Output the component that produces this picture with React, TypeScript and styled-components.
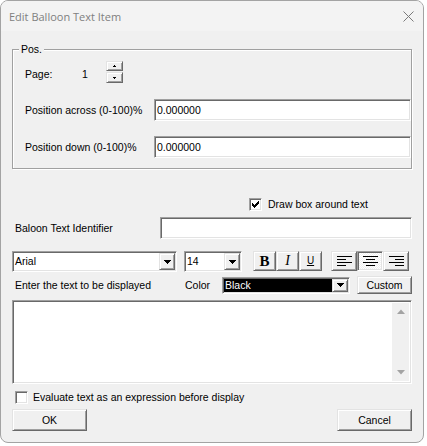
import React from 'react';
import styled, { createGlobalStyle, css } from 'styled-components';

const Global = createGlobalStyle`
  html, body { margin: 0; padding: 0; background: #ffffff; }
  * { box-sizing: border-box; }
`;

const sunken = css`
  border-style: solid;
  border-width: 1px;
  border-color: #a0a0a0 #ffffff #ffffff #a0a0a0;
  box-shadow: inset 1px 1px 0 #696969, inset -1px -1px 0 #e3e3e3;
`;

const raised = css`
  border-style: solid;
  border-width: 1px;
  border-color: #e3e3e3 #696969 #696969 #e3e3e3;
  box-shadow: inset 1px 1px 0 #ffffff, inset -1px -1px 0 #a0a0a0;
  background: #f0f0f0;
`;

const Window = styled.div`
  width: 424px;
  height: 443px;
  border: 1px solid #a3a3a3;
  border-radius: 8px;
  background: #f0f0f0;
  overflow: hidden;
  display: flex;
  flex-direction: column;
  font-family: "Liberation Sans", Arial, sans-serif;
  font-size: 10.5px;
  color: #000;
`;

const TitleBar = styled.div`
  height: 30px;
  flex: none;
  background: #f3f3f3;
  display: flex;
  align-items: center;
  justify-content: space-between;
  padding: 1px 9px 0 8px;
`;

const TitleText = styled.span`
  font-family: "Open Sans", "Noto Sans", sans-serif;
  font-size: 11px;
  color: #808080;
`;

const Body = styled.div`
  flex: 1;
  display: flex;
  flex-direction: column;
  padding: 0 11px;
`;

const Group = styled.div`
  position: relative;
  margin-top: 18px;
  height: 120px;
  flex: none;
  border: 1px solid #a0a0a0;
  box-shadow: inset 1px 1px 0 #fff, 1px 1px 0 #fff;
  padding: 11px 0 0 12px;
  display: flex;
  flex-direction: column;
`;

const Legend = styled.span`
  position: absolute;
  top: -7px;
  left: 6px;
  padding: 0 2px 0 2px;
  line-height: 13px;
  background: #f0f0f0;
`;

const Label = styled.span<{ $w?: number }>`
  line-height: 13px;
  white-space: nowrap;
  ${(p) => (p.$w ? `width: ${p.$w}px; flex: none;` : '')}
`;

const PageRow = styled.div`
  display: flex;
  height: 22px;
  align-items: flex-start;
`;

const PageText = styled(Label)`
  padding-top: 7px;
`;

const Spinner = styled.div`
  display: flex;
  flex-direction: column;
  gap: 1px;
`;

const SpinBtn = styled.div<{ $h: number }>`
  ${raised};
  width: 17px;
  height: ${(p) => p.$h}px;
  display: flex;
  align-items: center;
  justify-content: center;
`;

const FieldRow = styled.div<{ $mt: number; $lw: number; $pl?: number }>`
  display: grid;
  grid-template-columns: ${(p) => p.$lw}px 1fr;
  align-items: center;
  height: 22px;
  flex: none;
  margin-top: ${(p) => p.$mt}px;
  padding-left: ${(p) => p.$pl ?? 0}px;
`;

const TextInput = styled.div`
  ${sunken};
  background: #fff;
  height: 22px;
  display: flex;
  align-items: center;
  padding-left: 2px;
  line-height: 13px;
`;

const CheckRow = styled.div<{ $mt: number; $pl: number; $gap: number }>`
  display: flex;
  align-items: center;
  height: 13px;
  flex: none;
  margin-top: ${(p) => p.$mt}px;
  padding-left: ${(p) => p.$pl}px;
  gap: ${(p) => p.$gap}px;
`;

const CheckBox = styled.div`
  ${sunken};
  width: 13px;
  height: 13px;
  background: #fff;
  display: flex;
  align-items: center;
  justify-content: center;
  flex: none;
`;

const Toolbar = styled.div`
  display: flex;
  align-items: flex-start;
  height: 21px;
  flex: none;
  margin-top: 12px;
`;

const Combo = styled.div<{ $w: number; $h: number; $dark?: boolean; $ml?: number }>`
  ${sunken};
  width: ${(p) => p.$w}px;
  height: ${(p) => p.$h}px;
  margin-left: ${(p) => p.$ml ?? 0}px;
  background: ${(p) => (p.$dark ? '#000' : '#fff')};
  color: ${(p) => (p.$dark ? '#fff' : '#000')};
  padding: 1px;
  display: flex;
  align-items: stretch;
  flex: none;
`;

const ComboText = styled.span`
  flex: 1;
  display: flex;
  align-items: center;
  padding-left: 1px;
  line-height: 13px;
`;

const DropBtn = styled.div`
  ${raised};
  width: 16px;
  display: flex;
  align-items: center;
  justify-content: center;
`;

const BtnGroup = styled.div<{ $ml: number }>`
  display: flex;
  margin-left: ${(p) => p.$ml}px;
`;

const ToolBtn = styled.div<{ $w: number; $pressed?: boolean }>`
  width: ${(p) => p.$w}px;
  height: 20px;
  display: flex;
  align-items: center;
  justify-content: center;
  ${(p) =>
    p.$pressed
      ? css`
          ${sunken};
          background-color: #f0f0f0;
          background-image: conic-gradient(#ffffff 25%, #f0f0f0 0 50%, #ffffff 0 75%, #f0f0f0 0);
          background-size: 2px 2px;
        `
      : raised}
`;

const BoldGlyph = styled.span`
  font-family: "Liberation Serif", "Times New Roman", serif;
  font-weight: bold;
  font-size: 15px;
  line-height: 15px;
`;

const ItalicGlyph = styled.span`
  font-family: "Liberation Serif", "Times New Roman", serif;
  font-style: italic;
  font-size: 14px;
  line-height: 14px;
`;

const UnderGlyph = styled.span`
  font-family: "Liberation Sans", Arial, sans-serif;
  font-size: 10px;
  line-height: 12px;
  text-decoration: underline;
`;

const InfoRow = styled.div`
  display: flex;
  align-items: center;
  height: 18px;
  flex: none;
  margin-top: 4px;
  padding-left: 3px;
`;

const PushBtn = styled.div<{ $w: number; $h: number; $ml?: string }>`
  ${raised};
  width: ${(p) => p.$w}px;
  height: ${(p) => p.$h}px;
  margin-left: ${(p) => p.$ml ?? '0'};
  display: flex;
  align-items: center;
  justify-content: center;
  line-height: 13px;
  flex: none;
`;

const TextArea = styled.div`
  ${sunken};
  background: #fff;
  height: 84px;
  margin-top: 6px;
  flex: none;
  padding: 2px;
  display: flex;
  justify-content: flex-end;
`;

const ScrollBar = styled.div`
  width: 17px;
  background: #f0f0f0;
  display: flex;
  flex-direction: column;
  justify-content: space-between;
`;

const ScrollArrow = styled.div`
  height: 17px;
  display: flex;
  align-items: center;
  justify-content: center;
`;

const ButtonRow = styled.div`
  display: flex;
  margin-top: 5px;
  flex: none;
`;

const TinyArrow = ({ up }: { up?: boolean }) => (
  <svg width="5" height="3" viewBox="0 0 5 3" shapeRendering="crispEdges">
    {up ? (
      <>
        <rect x="2" y="0" width="1" height="1" fill="#000" />
        <rect x="1" y="1" width="3" height="1" fill="#000" />
      </>
    ) : (
      <>
        <rect x="1" y="1" width="3" height="1" fill="#000" />
        <rect x="2" y="2" width="1" height="1" fill="#000" />
      </>
    )}
  </svg>
);

const DropArrow = () => (
  <svg width="7" height="4" viewBox="0 0 7 4" shapeRendering="crispEdges">
    <rect x="0" y="0" width="7" height="1" fill="#000" />
    <rect x="1" y="1" width="5" height="1" fill="#000" />
    <rect x="2" y="2" width="3" height="1" fill="#000" />
    <rect x="3" y="3" width="1" height="1" fill="#000" />
  </svg>
);

const ScrollTri = ({ up }: { up?: boolean }) => (
  <svg width="8" height="5" viewBox="0 0 8 5">
    <polygon points={up ? '0,5 4,0.5 8,5' : '0,0 4,4.5 8,0'} fill="#a3a3a3" />
  </svg>
);

const CheckMark = () => (
  <svg width="7" height="7" viewBox="0 0 7 7" shapeRendering="crispEdges">
    {[2, 3, 4, 3, 2, 1, 0].map((y, x) => (
      <rect key={x} x={x} y={y} width="1" height="3" fill="#000" />
    ))}
  </svg>
);

const AlignIcon = ({ mode }: { mode: 'left' | 'center' | 'right' }) => {
  const widths = [15, 9, 15, 9];
  return (
    <svg width="15" height="10" viewBox="0 0 15 10" shapeRendering="crispEdges">
      {widths.map((w, i) => {
        const x = mode === 'left' ? 0 : mode === 'right' ? 15 - w : (15 - w) / 2;
        return <rect key={i} x={Math.round(x)} y={i * 3} width={w} height="1" fill="#000" />;
      })}
    </svg>
  );
};

const CloseIcon = () => (
  <svg width="11" height="11" viewBox="0 0 11 11">
    <path d="M0.5 0.5 L10.5 10.5 M10.5 0.5 L0.5 10.5" stroke="#7a7a7a" strokeWidth="1" />
  </svg>
);

export default function App() {
  return (
    <>
      <Global />
      <Window>
        <TitleBar>
          <TitleText>Edit Balloon Text Item</TitleText>
          <CloseIcon />
        </TitleBar>
        <Body>
          <Group>
            <Legend>Pos.</Legend>
            <PageRow>
              <PageText $w={57}>Page:</PageText>
              <PageText $w={24}>1</PageText>
              <Spinner>
                <SpinBtn $h={10}>
                  <TinyArrow up />
                </SpinBtn>
                <SpinBtn $h={11}>
                  <TinyArrow />
                </SpinBtn>
              </Spinner>
            </PageRow>
            <FieldRow $mt={16} $lw={129}>
              <Label>Position across (0-100)%</Label>
              <TextInput>0.000000</TextInput>
            </FieldRow>
            <FieldRow $mt={15} $lw={129}>
              <Label>Position down (0-100)%</Label>
              <TextInput>0.000000</TextInput>
            </FieldRow>
          </Group>

          <CheckRow $mt={29} $pl={237} $gap={6}>
            <CheckBox>
              <CheckMark />
            </CheckBox>
            <Label>Draw box around text</Label>
          </CheckRow>

          <FieldRow $mt={6} $lw={145} $pl={3}>
            <Label>Baloon Text Identifier</Label>
            <TextInput />
          </FieldRow>

          <Toolbar>
            <Combo $w={165} $h={21}>
              <ComboText>Arial</ComboText>
              <DropBtn>
                <DropArrow />
              </DropBtn>
            </Combo>
            <Combo $w={58} $h={21} $ml={7}>
              <ComboText>14</ComboText>
              <DropBtn>
                <DropArrow />
              </DropBtn>
            </Combo>
            <BtnGroup $ml={11}>
              <ToolBtn $w={23}>
                <BoldGlyph>B</BoldGlyph>
              </ToolBtn>
              <ToolBtn $w={23}>
                <ItalicGlyph>I</ItalicGlyph>
              </ToolBtn>
              <ToolBtn $w={23}>
                <UnderGlyph>U</UnderGlyph>
              </ToolBtn>
            </BtnGroup>
            <BtnGroup $ml={9}>
              <ToolBtn $w={26}>
                <AlignIcon mode="left" />
              </ToolBtn>
              <ToolBtn $w={26} $pressed>
                <AlignIcon mode="center" />
              </ToolBtn>
              <ToolBtn $w={26}>
                <AlignIcon mode="right" />
              </ToolBtn>
            </BtnGroup>
          </Toolbar>

          <InfoRow>
            <Label $w={170}>Enter the text to be displayed</Label>
            <Label $w={37}>Color</Label>
            <Combo $w={128} $h={17} $dark>
              <ComboText>Black</ComboText>
              <DropBtn>
                <DropArrow />
              </DropBtn>
            </Combo>
            <PushBtn $w={55} $h={18} $ml="auto">
              Custom
            </PushBtn>
          </InfoRow>

          <TextArea>
            <ScrollBar>
              <ScrollArrow>
                <ScrollTri up />
              </ScrollArrow>
              <ScrollArrow>
                <ScrollTri />
              </ScrollArrow>
            </ScrollBar>
          </TextArea>

          <CheckRow $mt={7} $pl={3} $gap={5}>
            <CheckBox />
            <Label>Evaluate text as an expression before display</Label>
          </CheckRow>

          <ButtonRow>
            <PushBtn $w={75} $h={22}>
              OK
            </PushBtn>
            <PushBtn $w={75} $h={22} $ml="auto">
              Cancel
            </PushBtn>
          </ButtonRow>
        </Body>
      </Window>
    </>
  );
}
